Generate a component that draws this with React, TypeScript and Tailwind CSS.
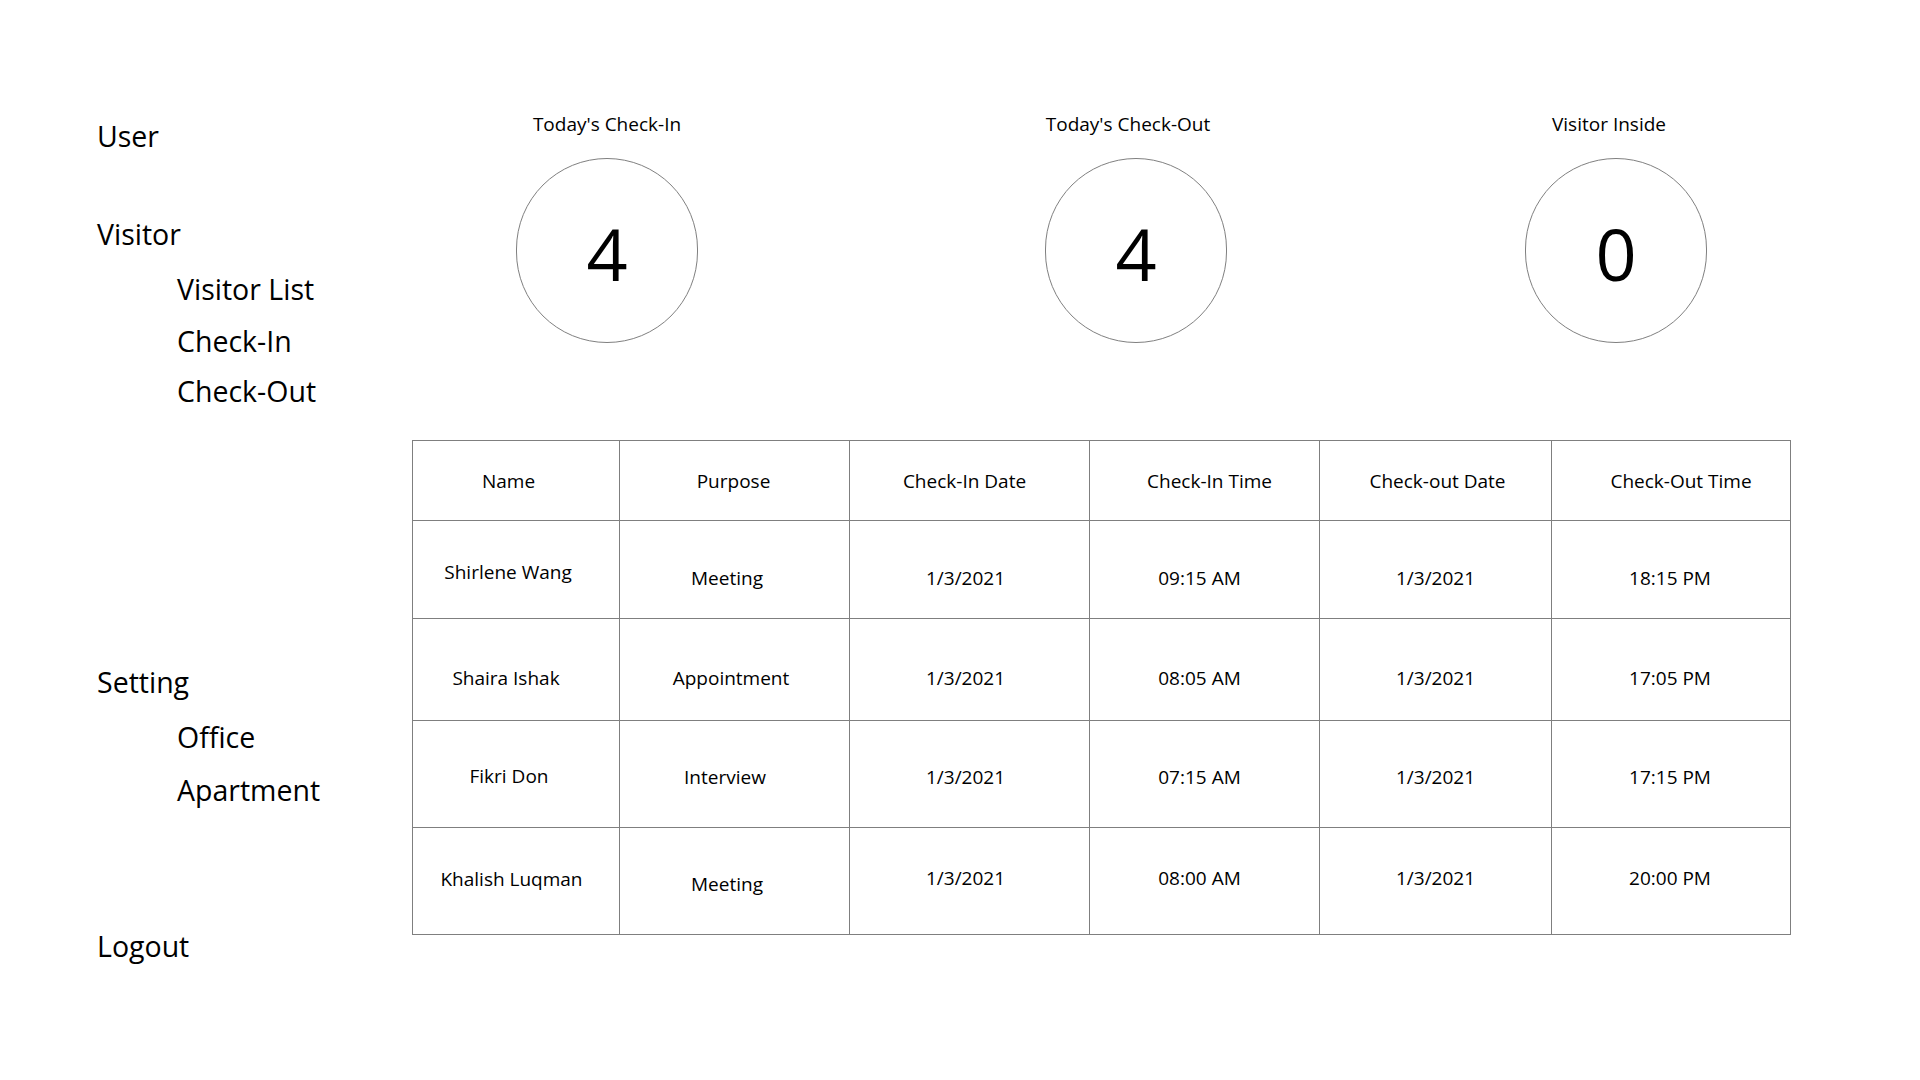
import React from "react";

const font = { fontFamily: '"Open Sans", "Noto Sans", sans-serif' };

type Cell = { text: string; cls: string };

const header: Cell[] = [
  { text: "Name", cls: "pr-[15px] pt-[1px]" },
  { text: "Purpose", cls: "pr-[2px] pt-[1px]" },
  { text: "Check-In Date", cls: "pr-[10px] pt-[1px]" },
  { text: "Check-In Time", cls: "pl-[10px] pt-[1px]" },
  { text: "Check-out Date", cls: "pl-[4px] pt-[1px]" },
  { text: "Check-Out Time", cls: "pl-[20px] pt-[1px]" },
];

const rows: { h: string; cells: Cell[] }[] = [
  {
    h: "h-[98px]",
    cells: [
      { text: "Shirlene Wang", cls: "pr-[16px] pt-[5px]" },
      { text: "Meeting", cls: "pr-[15px] pt-[17px]" },
      { text: "1/3/2021", cls: "pr-[8px] pt-[17px]" },
      { text: "09:15 AM", cls: "pr-[10px] pt-[17px]" },
      { text: "1/3/2021", cls: "pt-[17px]" },
      { text: "18:15 PM", cls: "pr-[2px] pt-[17px]" },
    ],
  },
  {
    h: "h-[102px]",
    cells: [
      { text: "Shaira Ishak", cls: "pr-[20px] pt-[16px]" },
      { text: "Appointment", cls: "pr-[7px] pt-[16px]" },
      { text: "1/3/2021", cls: "pr-[8px] pt-[17px]" },
      { text: "08:05 AM", cls: "pr-[10px] pt-[17px]" },
      { text: "1/3/2021", cls: "pt-[17px]" },
      { text: "17:05 PM", cls: "pr-[2px] pt-[17px]" },
    ],
  },
  {
    h: "h-[107px]",
    cells: [
      { text: "Fikri Don", cls: "pr-[14px] pt-[4px]" },
      { text: "Interview", cls: "pr-[19px] pt-[6px]" },
      { text: "1/3/2021", cls: "pr-[8px] pt-[5px]" },
      { text: "07:15 AM", cls: "pr-[10px] pt-[5px]" },
      { text: "1/3/2021", cls: "pt-[5px]" },
      { text: "17:15 PM", cls: "pr-[2px] pt-[5px]" },
    ],
  },
  {
    h: "h-[107px]",
    cells: [
      { text: "Khalish Luqman", cls: "pr-[9px] pb-[4px]" },
      { text: "Meeting", cls: "pr-[15px] pt-[6px]" },
      { text: "1/3/2021", cls: "pr-[8px] pb-[7px]" },
      { text: "08:00 AM", cls: "pr-[10px] pb-[7px]" },
      { text: "1/3/2021", cls: "pb-[7px]" },
      { text: "20:00 PM", cls: "pr-[2px] pb-[7px]" },
    ],
  },
];

function Stat({
  title,
  value,
  className,
  titleCls,
}: {
  title: string;
  value: string;
  className: string;
  titleCls: string;
}) {
  return (
    <div className={`flex w-[182px] flex-col items-center ${className}`}>
      <div
        className={`whitespace-nowrap text-center text-[19px] leading-[28px] text-black ${titleCls}`}
      >
        {title}
      </div>
      <div className="mt-[20px] flex h-[185px] w-[182px] items-center justify-center rounded-full border border-[#808080]">
        <span className="pt-[5px] text-[72px] leading-none text-black">{value}</span>
      </div>
    </div>
  );
}

export default function App() {
  return (
    <div className="flex h-[1080px] w-[1920px] bg-white text-black" style={font}>
      <aside className="flex w-[412px] shrink-0 flex-col pl-[97px] pt-[116px] text-[28.5px] leading-[40px]">
        <div>User</div>
        <div className="mt-[58px]">Visitor</div>
        <div className="ml-[80px] mt-[15px]">Visitor List</div>
        <div className="ml-[80px] mt-[12px]">Check-In</div>
        <div className="ml-[80px] mt-[10px]">Check-Out</div>
        <div className="mt-[251px]">Setting</div>
        <div className="ml-[80px] mt-[15px]">Office</div>
        <div className="ml-[80px] mt-[13px]">Apartment</div>
        <div className="mt-[116px]">Logout</div>
      </aside>
      <main className="flex flex-col pt-[110px]">
        <div className="flex">
          <Stat title="Today's Check-In" value="4" className="ml-[104px]" titleCls="" />
          <Stat title="Today's Check-Out" value="4" className="ml-[347px]" titleCls="pr-[16px]" />
          <Stat title="Visitor Inside" value="0" className="ml-[298px]" titleCls="pr-[14px]" />
        </div>
        <table className="mt-[97px] w-[1378px] table-fixed border-collapse text-[19px] leading-[26px]">
          <colgroup>
            <col className="w-[207px]" />
            <col className="w-[230px]" />
            <col className="w-[240px]" />
            <col className="w-[230px]" />
            <col className="w-[232px]" />
            <col className="w-[239px]" />
          </colgroup>
          <thead>
            <tr className="h-[80px]">
              {header.map((c, i) => (
                <th
                  key={i}
                  className={`border border-[#7f7f7f] p-0 text-center align-middle font-normal whitespace-nowrap ${c.cls}`}
                >
                  {c.text}
                </th>
              ))}
            </tr>
          </thead>
          <tbody>
            {rows.map((r, ri) => (
              <tr key={ri} className={r.h}>
                {r.cells.map((c, i) => (
                  <td
                    key={i}
                    className={`border border-[#7f7f7f] p-0 text-center align-middle whitespace-nowrap ${c.cls}`}
                  >
                    {c.text}
                  </td>
                ))}
              </tr>
            ))}
          </tbody>
        </table>
      </main>
    </div>
  );
}
